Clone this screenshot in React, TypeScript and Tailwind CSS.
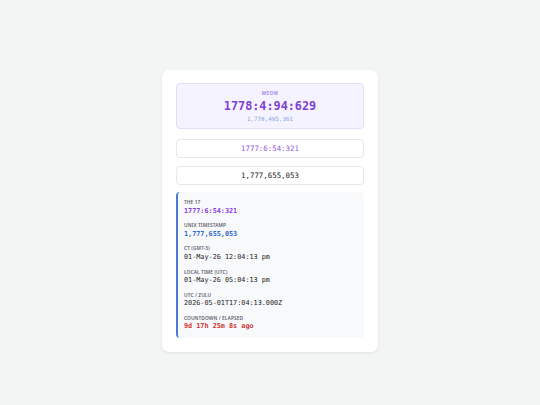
import React from "react";

const mono = { fontFamily: '"DejaVu Sans Mono", "Liberation Mono", monospace' };

function Item({ label, value, cls }: { label: string; value: string; cls: string }) {
  return (
    <div className="flex flex-col">
      <div className="text-[4.8px] leading-[6px] font-semibold uppercase tracking-[0.1px] text-[#5a6069] font-['Noto_Sans',sans-serif]">
        {label}
      </div>
      <div className={`mt-[1.5px] text-[6.8px] leading-[9px] font-['DejaVu_Sans_Mono',monospace] ${cls}`}>{value}</div>
    </div>
  );
}

export default function App() {
  return (
    <div className="min-h-[405px] w-full bg-[#f3f4f4] pt-[70px] font-['Noto_Sans',sans-serif]">
      <div className="mx-auto w-[216px] rounded-[7px] bg-white px-[14px] pt-[13px] pb-[14px] shadow-[0_1px_3px_rgba(0,0,0,0.08)]">
        <div className="flex h-[46px] flex-col items-center justify-center rounded-[4px] border border-[#e3dcfb] bg-[#f5f3ff]">
          <div className="text-[4.6px] leading-[6px] font-bold uppercase tracking-[0.4px] text-[#a98bf0]">MEOW</div>
          <div className="mt-[3px] text-[11.8px] leading-[14px] font-bold text-[#7d42d2]" style={mono}>
            1778:4:94:629
          </div>
          <div className="mt-[2px] text-[5.9px] leading-[8px] text-[#82a6e4]" style={mono}>
            1,778,495,361
          </div>
        </div>
        <div
          className="mt-[10px] flex h-[19px] items-center justify-center rounded-[4px] border border-[#e5e7eb] bg-white text-[7.4px] text-[#9257d8]"
          style={mono}
        >
          1777:6:54:321
        </div>
        <div
          className="mt-[8px] flex h-[19px] items-center justify-center rounded-[4px] border border-[#e5e7eb] bg-white text-[7.4px] text-[#222]"
          style={mono}
        >
          1,777,655,053
        </div>
        <div className="mt-[7px] flex h-[146px] flex-col gap-[6.7px] rounded-[4px] border-l-2 border-[#4b7bd1] bg-[#f8f9fb] pl-[6px] pt-[7px]">
          <Item label="The 17" value="1777:6:54:321" cls="font-bold text-[#8a3fd9]" />
          <Item label="Unix Timestamp" value="1,777,655,053" cls="font-bold text-[#2d6ad1]" />
          <Item label="CT (GMT-5)" value="01-May-26 12:04:13 pm" cls="text-[#222]" />
          <Item label="Local Time (UTC)" value="01-May-26 05:04:13 pm" cls="text-[#222]" />
          <Item label="UTC / Zulu" value="2026-05-01T17:04:13.000Z" cls="text-[#222]" />
          <Item label="Countdown / Elapsed" value="9d 17h 25m 8s ago" cls="font-bold text-[#d32f2f]" />
        </div>
      </div>
    </div>
  );
}
